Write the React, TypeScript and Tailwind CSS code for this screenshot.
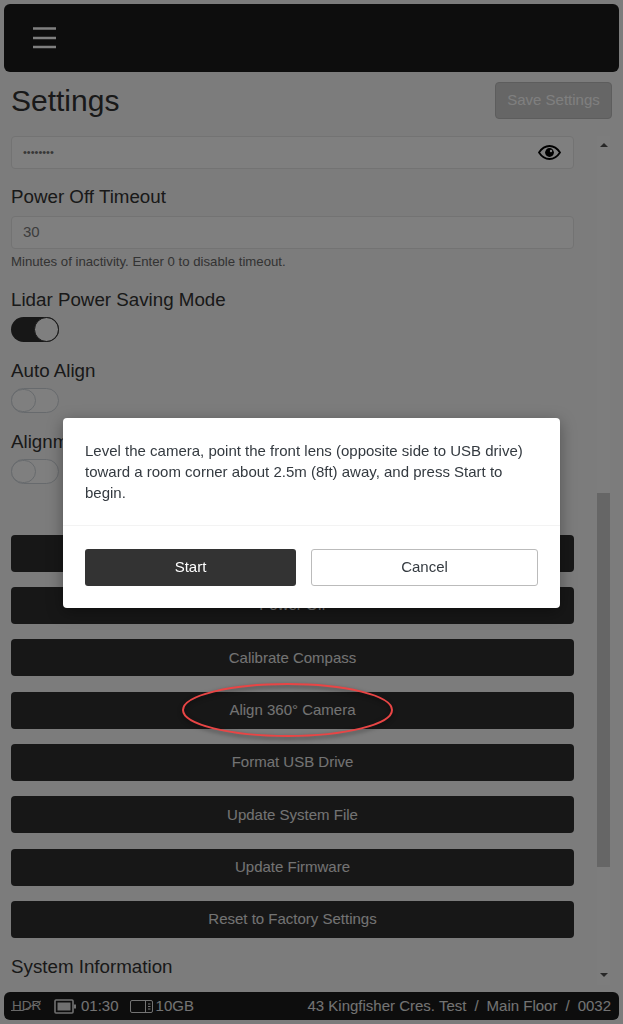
const FONT = "font-['Liberation_Sans',Arial,sans-serif]";

function Toggle({ on }: { on?: boolean }) {
  return on ? (
    <div className="w-12 h-[25px] rounded-full bg-[#2e2e2e] flex justify-end">
      <div className="w-[25px] h-[25px] rounded-full bg-white border border-[#2e2e2e]" />
    </div>
  ) : (
    <div className="w-12 h-[25px] rounded-full bg-white border border-[#ced4da] flex">
      <div className="w-[25px] h-[23px] rounded-full bg-white border border-[#ced4da] -ml-px" />
    </div>
  );
}

const actions = [
  "Reboot",
  "Power Off",
  "Calibrate Compass",
  "Align 360° Camera",
  "Format USB Drive",
  "Update System File",
  "Update Firmware",
  "Reset to Factory Settings",
];

export default function App() {
  return (
    <div className={`${FONT} relative h-screen w-full overflow-hidden bg-[#f8f8f8] text-[#333333] flex flex-col`}>
      <header className="mx-1 mt-1 h-[68px] shrink-0 rounded-[6px] bg-[#1a1a1a] flex items-center pl-[29px]">
        <svg width="23" height="22" viewBox="0 0 23 22" className="text-white">
          <path d="M0 1.5h23M0 11h23M0 20h23" stroke="currentColor" strokeWidth="2.4" />
        </svg>
      </header>

      <div className="mt-[10px] h-[37px] shrink-0 flex items-center justify-between pl-[11px] pr-[11px]">
        <h1 className="text-[30px] leading-[37px]">Settings</h1>
        <button className="h-[37px] w-[117px] rounded-[4px] border border-[#bbb] bg-[#ccc] text-white text-[15px]">Save Settings</button>
      </div>

      <div className="mt-[17px] flex-1 min-h-0 flex">
        <main className="w-[597px] shrink-0 pl-[11px] pr-[23px] flex flex-col">
          <div className="h-[33px] shrink-0 rounded-[4px] border border-[#e6e6e6] bg-white flex items-center justify-between pl-[11px] pr-[12px]">
            <span className="text-[11px] text-[#707070] leading-none">••••••••</span>
            <svg width="23" height="15" viewBox="0 0 23 15" fill="none" className="text-black">
              <path d="M1 7.5C3.8 3.2 7.4 1 11.5 1S19.2 3.2 22 7.5C19.2 11.8 15.6 14 11.5 14S3.8 11.8 1 7.5Z" stroke="currentColor" strokeWidth="1.8" />
              <circle cx="11.5" cy="7.5" r="4.4" fill="currentColor" />
              <circle cx="13" cy="6" r="1.2" fill="#fff" />
            </svg>
          </div>

          <label className="mt-[17px] text-[18.75px] leading-[21px]">Power Off Timeout</label>
          <div className="mt-[9px] h-[33px] shrink-0 rounded-[4px] border border-[#e6e6e6] bg-white flex items-center pl-[11px] text-[15px] text-[#7a7a7a]">30</div>
          <p className="mt-[5px] text-[13.2px] leading-[15px] text-[#666666]">Minutes of inactivity. Enter 0 to disable timeout.</p>

          <label className="mt-[20px] text-[18.75px] leading-[21px]">Lidar Power Saving Mode</label>
          <div className="mt-[7px]"><Toggle on /></div>

          <label className="mt-[18px] text-[18.75px] leading-[21px]">Auto Align</label>
          <div className="mt-[7px]"><Toggle /></div>

          <label className="mt-[18px] text-[18.75px] leading-[21px]">Alignment Guide</label>
          <div className="mt-[7px]"><Toggle /></div>

          <div className="mt-[50.8px] flex flex-col gap-[15.33px]">
            {actions.map((a) => (
              <button key={a} className="h-[37px] shrink-0 rounded-[4px] bg-[#2e2e2e] text-[#e6e6e6] text-[15px]">{a}</button>
            ))}
          </div>

          <h2 className="mt-[17.5px] text-[18.75px] leading-[21px]">System Information</h2>
        </main>

        <div className="w-[13px] shrink-0 mb-[7px] bg-[#fafafa] flex flex-col items-center">
          <div className="h-[357px] w-full flex justify-center pt-[7px]">
            <div className="w-0 h-0 border-x-[4px] border-x-transparent border-b-[4px] border-b-[#505050]" />
          </div>
          <div className="h-[374px] w-full bg-[#ccc]" />
          <div className="flex-1 w-full flex justify-center items-end pb-[8px]">
            <div className="w-0 h-0 border-x-[4px] border-x-transparent border-t-[4px] border-t-[#505050]" />
          </div>
        </div>
      </div>

      <footer className="mx-1 mb-1 h-7 shrink-0 rounded-[6px] bg-[#1a1a1a] text-[#e6e6e6] flex items-center justify-between pl-[8px] pr-[8px] text-[15px]">
        <div className="flex items-center">
          <span className="relative w-[30px] text-[13.5px] text-[#d0d0d0] leading-none">
            HDR
            <svg width="31" height="14" viewBox="0 0 31 14" className="absolute left-[-1px] top-0">
              <path d="M0 11.5 H12 L30 2" stroke="currentColor" strokeWidth="1" fill="none" />
            </svg>
          </span>
          <svg width="22" height="15" viewBox="0 0 22 15" className="ml-[12px] text-[#e0e0e0]" fill="none">
            <rect x="1" y="1" width="18" height="13" rx="1" stroke="currentColor" strokeWidth="1.6" />
            <rect x="3.5" y="3.5" width="13" height="8" fill="currentColor" />
            <rect x="20" y="5.5" width="2" height="4" fill="currentColor" />
          </svg>
          <span className="ml-[5px]">01:30</span>
          <svg width="23" height="13" viewBox="0 0 23 13" className="ml-[11px]" fill="none">
            <rect x="0.5" y="0.5" width="22" height="12" rx="1.5" stroke="currentColor" />
            <path d="M15.5 .5v12" stroke="currentColor" />
            <path d="M18 4h2.5M18 6.5h2.5M18 9h2.5" stroke="currentColor" />
          </svg>
          <span className="ml-[3px]">10GB</span>
        </div>
        <div className="flex items-center gap-[8px]">
          <span>43 Kingfisher Cres. Test</span>
          <span>/</span>
          <span>Main Floor</span>
          <span>/</span>
          <span>0032</span>
        </div>
      </footer>

      <div className="fixed inset-0 bg-black/50" />

      <svg width="216" height="60" viewBox="0 0 216 60" fill="none" className="absolute left-[180px] top-[680px] drop-shadow-[0_2px_2px_rgba(0,0,0,0.5)]">
        <ellipse cx="107.5" cy="30" rx="104.5" ry="26" stroke="#e84545" strokeWidth="2" />
      </svg>

      <div className="fixed inset-0 flex items-center justify-center pt-[2px]">
        <div className="w-[497px] h-[190px] rounded-[4px] bg-white shadow-[0_4px_16px_rgba(0,0,0,0.35)] flex flex-col">
          <p className="h-[108px] shrink-0 pt-[22px] px-[22px] text-[15px] leading-[21px] text-[#343a40] border-b border-[#f3f3f3]">
            Level the camera, point the front lens (opposite side to USB drive) toward a room corner about 2.5m (8ft) away, and press Start to begin.
          </p>
          <div className="flex-1 flex items-center pl-[22px] gap-[15px]">
            <button className="w-[211px] h-[37px] pt-px rounded-[3px] bg-[#333333] text-white text-[15px]">Start</button>
            <button className="w-[227px] h-[37px] pt-px rounded-[3px] bg-white border border-[#bbb] text-[#343a40] text-[15px]">Cancel</button>
          </div>
        </div>
      </div>
    </div>
  );
}
